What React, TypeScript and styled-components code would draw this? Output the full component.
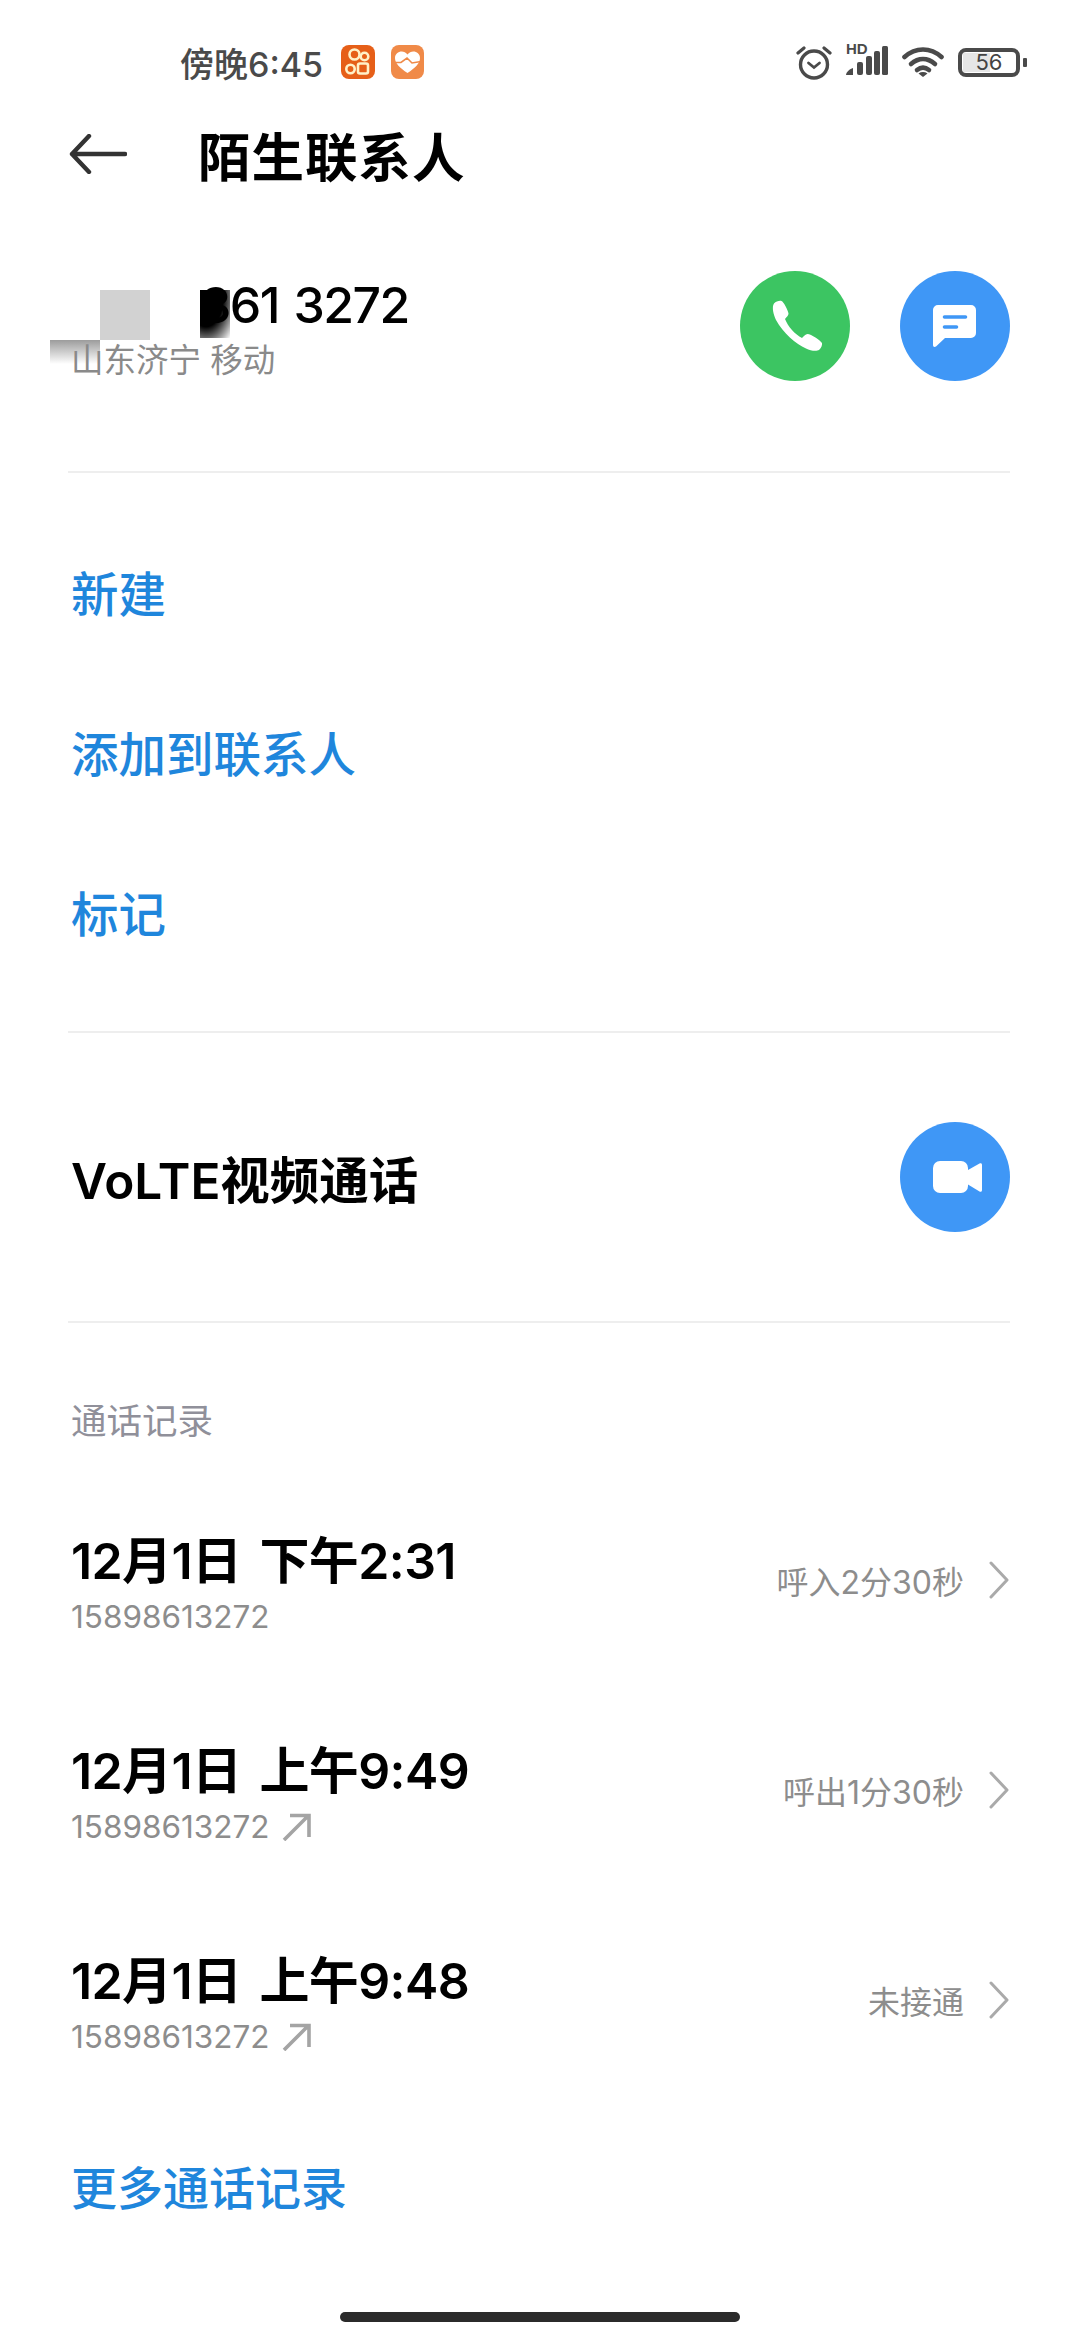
import styled, { createGlobalStyle } from 'styled-components';

const GlobalStyle = createGlobalStyle`
	html, body {
		margin: 0;
		padding: 0;
		background: #fff;
		font-family: "Inter", "Noto Sans CJK SC", sans-serif;
	}
`;

const records = [
	{ time: '12月1日 下午2:31', number: '15898613272', outgoing: false, status: '呼入2分30秒' },
	{ time: '12月1日 上午9:49', number: '15898613272', outgoing: true, status: '呼出1分30秒' },
	{ time: '12月1日 上午9:48', number: '15898613272', outgoing: true, status: '未接通' }
];

function AlarmIcon() {
	return (
		<svg width="36" height="36" viewBox="0 0 36 36" fill="none" stroke="#4a4a4a" strokeLinecap="round">
			<circle cx="18" cy="20.5" r="13.5" strokeWidth="3.4" />
			<path d="M12.5 19l5.5 4.5 5.5-4.5" strokeWidth="2.8" />
			<path d="M2 9l6-5M34 9l-6-5" strokeWidth="3.2" />
		</svg>
	);
}

function SignalIcon() {
	return (
		<svg width="42" height="30" viewBox="0 0 42 30" fill="#4a4a4a">
			<path d="M0 29c0-3 4-6 7-7v7z" />
			<rect x="11" y="16" width="6" height="13" rx="2" />
			<rect x="20" y="10" width="6" height="19" rx="2" />
			<rect x="28" y="5" width="6" height="24" rx="2" />
			<rect x="36" y="0" width="6" height="29" rx="1.5" />
		</svg>
	);
}

function WifiIcon() {
	return (
		<svg width="42" height="30" viewBox="0 0 42 30" fill="none" stroke="#4a4a4a" strokeWidth="4.6" strokeLinecap="round">
			<path d="M2.500 10c11-10 26-10 37 0" />
			<path d="M9 17c7.500-6.500 16.500-6.500 24 0" />
			<path d="M15 23c4-3.300 8-3.300 12 0" />
			<path d="M21 30l-4.500-3.600c2.800-1.800 6.200-1.800 9 0z" fill="#4a4a4a" stroke="none" />
		</svg>
	);
}

function KuaishouIcon() {
	return (
		<svg width="34" height="34" viewBox="0 0 34 34">
			<rect width="34" height="34" rx="8" fill="#e65f18" />
			<g fill="none" stroke="#fff1c8" strokeWidth="2.6">
				<circle cx="13.500" cy="9.500" r="5" />
				<circle cx="23.500" cy="11.500" r="3.800" />
				<circle cx="9.500" cy="24" r="4.200" />
				<rect x="17" y="18.500" width="10" height="10" rx="2" />
			</g>
		</svg>
	);
}

function HealthIcon() {
	return (
		<svg width="33" height="34" viewBox="0 0 33 34">
			<rect width="33" height="34" rx="8" fill="#f08a48" />
			<path d="M16.500 28C9 23 4 18.500 4 13c0-6.500 8.500-9 12.500-3.500C20.500 4 29 6.500 29 13c0 5.500-5 10-12.500 15z" fill="#fff" />
			<path d="M3 17.500h7l6-4.500 5 5 9-1.500" fill="none" stroke="#f08a48" strokeWidth="1.600" />
		</svg>
	);
}

function PhoneIcon() {
	return (
		<svg width="110" height="110" viewBox="0 0 110 110">
			<path
				d="M34 32.500c2-2 5-3 7.500-2.500 2 .5 6.500 9 7 12.500.2 2-2.500 4-3.500 5.500 3 7.500 10 15.500 17 19 1.500-1.200 3.500-4 5.500-4 3.500 0 13 6.500 14.500 9 .5 2-1 5.500-3 7-2.500 1.500-8.500.8-13-1.500C56 73 43 62 36 49c-2.500-5-4.500-13-2-16.500z"
				fill="#fff"
			/>
		</svg>
	);
}

function MessageIcon() {
	return (
		<svg width="110" height="110" viewBox="0 0 110 110">
			<path
				d="M38 34h33a5 5 0 0 1 5 5v23a5 5 0 0 1-5 5H45l-9 8.500c-1.500 1-3 .5-3-1.500V39a5 5 0 0 1 5-5z"
				fill="#fff"
			/>
			<path d="M44.500 46h21M44.500 56h12" stroke="#3f97f6" strokeWidth="3.600" strokeLinecap="round" />
		</svg>
	);
}

function VideoIcon() {
	return (
		<svg width="110" height="110" viewBox="0 0 110 110" fill="#fff">
			<rect x="33" y="39" width="35" height="32" rx="7" />
			<path d="M68 48l11.500-6.500c1.500-.7 2.500 0 2.500 1.500v25c0 1.500-1 2.200-2.500 1.500L68 62.500z" />
		</svg>
	);
}

function ChevronIcon() {
	return (
		<svg width="24" height="38" viewBox="0 0 24 38" fill="none" stroke="#aaaaaa" strokeWidth="3" strokeLinecap="round" strokeLinejoin="round">
			<path d="M5 2l16 17L5 36" />
		</svg>
	);
}

function OutgoingIcon() {
	return (
		<svg width="30" height="28" viewBox="0 0 30 28" fill="none" stroke="#a4a4a4" strokeWidth="3.6">
			<path d="M2 27L26 3M8 2.500h19V24" />
		</svg>
	);
}

export default function App() {
	return (
		<Page>
			<GlobalStyle />
			<StatusBar>
				<StatusLeft>
					<Clock>傍晚6:45</Clock>
					<KuaishouIcon />
					<HealthIcon />
				</StatusLeft>
				<StatusRight>
					<AlarmIcon />
					<SignalWrap>
						<HdLabel>HD</HdLabel>
						<SignalIcon />
					</SignalWrap>
					<WifiIcon />
					<Battery>
						<BatteryBody>
							<BatteryLevel />
							<BatteryText>56</BatteryText>
						</BatteryBody>
						<BatteryTip />
					</Battery>
				</StatusRight>
			</StatusBar>

			<Header>
				<svg width="58" height="40" viewBox="0 0 58 40" fill="none" stroke="#333" strokeWidth="4.4" strokeLinecap="round" strokeLinejoin="round">
					<path d="M56 20H3M20 2L3 20l17 18" />
				</svg>
				<Title>陌生联系人</Title>
			</Header>

			<ContactRow>
				<ContactInfo>
					<BlurSquare />
					<BlurStrip />
					<BlurInk />
					<PhoneNumber>361 3272</PhoneNumber>
					<Location>山东济宁 移动</Location>
				</ContactInfo>
				<CircleButtons>
					<CircleButton $color="#3cc562">
						<PhoneIcon />
					</CircleButton>
					<CircleButton $color="#3f97f6">
						<MessageIcon />
					</CircleButton>
				</CircleButtons>
			</ContactRow>

			<ActionList>
				<ActionRow>新建</ActionRow>
				<ActionRow>添加到联系人</ActionRow>
				<ActionRow>标记</ActionRow>
			</ActionList>

			<VideoRow>
				<VideoLabel>VoLTE视频通话</VideoLabel>
				<CircleButton $color="#3f97f6">
					<VideoIcon />
				</CircleButton>
			</VideoRow>

			<SectionTitle>通话记录</SectionTitle>
			{records.map((record) => (
				<RecordRow key={record.time}>
					<RecordMain>
						<RecordTime>{record.time}</RecordTime>
						<RecordNumber>
							{record.number}
							{record.outgoing && <OutgoingIcon />}
						</RecordNumber>
					</RecordMain>
					<RecordSide>
						<RecordStatus>{record.status}</RecordStatus>
						<ChevronIcon />
					</RecordSide>
				</RecordRow>
			))}
			<MoreRow>更多通话记录</MoreRow>
			<HomeBar />
		</Page>
	);
}

const Page = styled.div`
	width: 1080px;
	height: 2340px;
	overflow: hidden;
	background: #fff;
	display: flex;
	flex-direction: column;
`;

const StatusBar = styled.div`
	height: 124px;
	padding: 0 53px 0 180px;
	display: flex;
	align-items: center;
	justify-content: space-between;
	box-sizing: border-box;
`;

const StatusLeft = styled.div`
	display: flex;
	align-items: center;
	gap: 16px;
`;

const Clock = styled.span`
	font-size: 34px;
	font-weight: 500;
	color: #4a4a4a;
	margin-right: 2px;
`;

const StatusRight = styled.div`
	display: flex;
	align-items: center;
	gap: 14px;
`;

const SignalWrap = styled.div`
	position: relative;
	padding-top: 2px;
`;

const HdLabel = styled.span`
	position: absolute;
	left: 0;
	top: -3px;
	font-size: 15px;
	line-height: 15px;
	font-weight: 700;
	font-family: "Liberation Sans", sans-serif;
	color: #4a4a4a;
`;

const Battery = styled.div`
	display: flex;
	align-items: center;
	gap: 3px;
`;

const BatteryBody = styled.div`
	position: relative;
	width: 62px;
	height: 29px;
	box-sizing: border-box;
	border: 4px solid #4a4a4a;
	border-radius: 8px;
	display: flex;
	align-items: center;
	justify-content: center;
`;

const BatteryLevel = styled.div`
	position: absolute;
	left: 1px;
	top: 1px;
	bottom: 1px;
	width: 27px;
	background: #e6e6e6;
`;

const BatteryText = styled.span`
	position: relative;
	font-size: 22px;
	line-height: 21px;
	color: #444;
`;

const BatteryTip = styled.div`
	width: 4px;
	height: 9px;
	background: #4a4a4a;
	border-radius: 1px;
`;

const Header = styled.div`
	height: 62px;
	padding: 0 0 2px 69px;
	box-sizing: border-box;
	margin-bottom: 2px;
	display: flex;
	align-items: center;
	gap: 71px;
`;

const Title = styled.h1`
	margin: 0;
	font-size: 52.5px;
	font-weight: 700;
	letter-spacing: 1px;
	color: #000;
`;

const ContactRow = styled.div`
	height: 285px;
	margin: 0 70px 0 68px;
	padding-top: 83px;
	box-sizing: border-box;
	border-bottom: 2px solid #eeeeee;
	display: flex;
	justify-content: space-between;
	align-items: flex-start;
`;

const ContactInfo = styled.div`
	position: relative;
	padding: 6px 0 0 3px;
`;

const PhoneNumber = styled.div`
	position: relative;
	margin-left: 129px;
	font-size: 50px;
	line-height: 56px;
	font-weight: 500;
	letter-spacing: -1.6px;
	word-spacing: 3px;
	color: #000;
`;

const Location = styled.div`
	position: relative;
	font-size: 32.5px;
	line-height: 44px;
	color: #8a8a8a;
	margin-top: 6px;
`;

const BlurSquare = styled.div`
	position: absolute;
	left: 32px;
	top: 19px;
	width: 50px;
	height: 50px;
	background: #d2d2d2;
`;

const BlurStrip = styled.div`
	position: absolute;
	left: -18px;
	top: 69px;
	width: 50px;
	height: 24px;
	background: linear-gradient(#9c9c9c, #ffffff);
`;

const BlurInk = styled.div`
	position: absolute;
	left: 132px;
	top: 19px;
	width: 30px;
	height: 48px;
	background: radial-gradient(ellipse at 20% 20%, #000 50%, rgba(0, 0, 0, 0) 100%);
`;

const CircleButtons = styled.div`
	display: flex;
	gap: 50px;
`;

const CircleButton = styled.div<{ $color: string }>`
	width: 110px;
	height: 110px;
	border-radius: 50%;
	background: ${(p) => p.$color};
	flex-shrink: 0;
`;

const ActionList = styled.div`
	height: 560px;
	margin: 0 70px 0 68px;
	padding: 38px 0 0 3px;
	box-sizing: border-box;
	border-bottom: 2px solid #eeeeee;
`;

const ActionRow = styled.div`
	height: 160px;
	display: flex;
	align-items: center;
	font-size: 47.5px;
	font-weight: 500;
	color: #1f86dc;
`;

const VideoRow = styled.div`
	height: 290px;
	margin: 0 70px 0 68px;
	padding-left: 3px;
	box-sizing: border-box;
	border-bottom: 2px solid #eeeeee;
	display: flex;
	align-items: center;
	justify-content: space-between;
`;

const VideoLabel = styled.div`
	font-size: 49.5px;
	font-weight: 600;
	color: #000;
`;

const SectionTitle = styled.div`
	height: 159px;
	padding: 76px 0 0 71px;
	box-sizing: border-box;
	font-size: 35.5px;
	line-height: 46px;
	color: #90909a;
`;

const RecordRow = styled.div`
	height: 210px;
	margin: 0 70px 0 71px;
	display: flex;
	align-items: center;
	justify-content: space-between;
`;

const RecordMain = styled.div`
	display: flex;
	flex-direction: column;
	gap: 2px;
	padding-bottom: 4px;
`;

const RecordTime = styled.div`
	font-size: 50px;
	line-height: 62px;
	font-weight: 600;
	letter-spacing: -0.6px;
	word-spacing: 6px;
	color: #000;
`;

const RecordNumber = styled.div`
	display: flex;
	align-items: center;
	gap: 12px;
	font-size: 31.5px;
	line-height: 46px;
	color: #8d8d8d;
`;

const RecordSide = styled.div`
	display: flex;
	align-items: center;
	gap: 22px;
	padding-bottom: 14px;
`;

const RecordStatus = styled.span`
	font-size: 32px;
	color: #8d8d8d;
`;

const MoreRow = styled.div`
	height: 152px;
	padding: 0 0 6px 71px;
	box-sizing: border-box;
	display: flex;
	align-items: center;
	font-size: 46px;
	font-weight: 500;
	color: #1f86dc;
`;

const HomeBar = styled.div`
	width: 400px;
	height: 10px;
	margin: 48px auto 0;
	border-radius: 5px;
	background: #2b2b2b;
`;
